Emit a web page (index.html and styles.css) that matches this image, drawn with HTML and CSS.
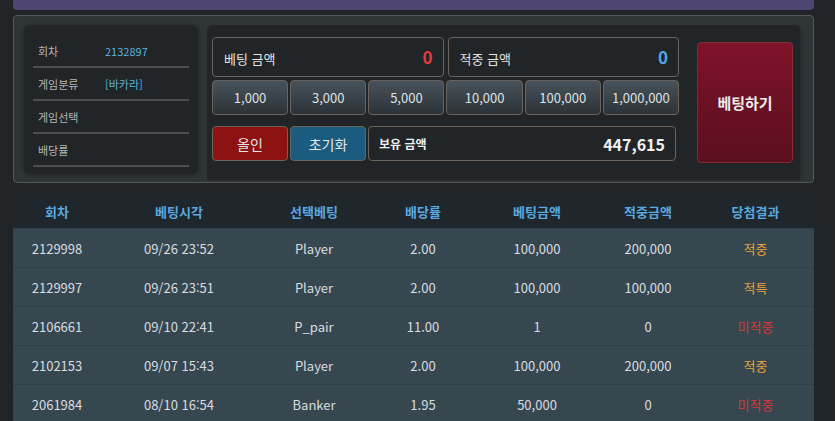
FILE: index.html
```html
<!DOCTYPE html>
<html lang="ko">
<head>
    <meta charset="UTF-8">
    <meta name="viewport" content="width=device-width, initial-scale=1.0">
    <title>베팅 내역</title>
    <link rel="stylesheet" href="styles.css">
</head>
<body>
    <div class="wrap">
        <div class="top-bar"></div>

        <div class="bet-panel">
            <div class="info-box">
                <div class="info-row"><span class="info-label">회차</span><span class="info-value">2132897</span></div>
                <div class="info-row"><span class="info-label">게임분류</span><span class="info-value">[바카라]</span></div>
                <div class="info-row"><span class="info-label">게임선택</span><span class="info-value"></span></div>
                <div class="info-row"><span class="info-label">배당률</span><span class="info-value"></span></div>
            </div>

            <div class="bet-box">
                <div class="bet-main">
                    <div class="amount-row">
                        <div class="amount">
                            <span class="amount-label">베팅 금액</span>
                            <span class="amount-num red">0</span>
                        </div>
                        <div class="amount">
                            <span class="amount-label">적중 금액</span>
                            <span class="amount-num blue">0</span>
                        </div>
                    </div>
                    <div class="chip-row">
                        <button class="chip">1,000</button>
                        <button class="chip">3,000</button>
                        <button class="chip">5,000</button>
                        <button class="chip">10,000</button>
                        <button class="chip">100,000</button>
                        <button class="chip">1,000,000</button>
                    </div>
                    <div class="action-row">
                        <button class="btn btn-allin">올인</button>
                        <button class="btn btn-reset">초기화</button>
                        <div class="balance">
                            <span>보유 금액</span>
                            <span class="balance-num">447,615</span>
                        </div>
                    </div>
                </div>
                <button class="btn-bet">베팅하기</button>
            </div>
        </div>

        <table class="history">
            <thead>
                <tr>
                    <th class="c1">회차</th>
                    <th class="c2">베팅시각</th>
                    <th class="c3">선택베팅</th>
                    <th class="c4">배당률</th>
                    <th class="c5">베팅금액</th>
                    <th class="c6">적중금액</th>
                    <th class="c7">당첨결과</th>
                </tr>
            </thead>
            <tbody>
                <tr>
                    <td>2129998</td><td>09/26 23:52</td><td>Player</td><td>2.00</td><td>100,000</td><td>200,000</td><td class="win">적중</td>
                </tr>
                <tr>
                    <td>2129997</td><td>09/26 23:51</td><td>Player</td><td>2.00</td><td>100,000</td><td>100,000</td><td class="win">적특</td>
                </tr>
                <tr>
                    <td>2106661</td><td>09/10 22:41</td><td>P_pair</td><td>11.00</td><td>1</td><td>0</td><td class="lose">미적중</td>
                </tr>
                <tr>
                    <td>2102153</td><td>09/07 15:43</td><td>Player</td><td>2.00</td><td>100,000</td><td>200,000</td><td class="win">적중</td>
                </tr>
                <tr>
                    <td>2061984</td><td>08/10 16:54</td><td>Banker</td><td>1.95</td><td>50,000</td><td>0</td><td class="lose">미적중</td>
                </tr>
            </tbody>
        </table>
    </div>
</body>
</html>
```

FILE: styles.css
```css
body {
    margin: 0;
    padding: 0;
    background-color: #222527;
    color: #d9dde0;
    font-family: "Noto Sans CJK KR", "Noto Sans", sans-serif;
    overflow: hidden;
}

.wrap {
    width: 801px;
    margin-left: 13px;
}

.top-bar {
    height: 10px;
    background-color: #4e4570;
    border-radius: 0 0 4px 4px;
}

/* 베팅 패널 */
.bet-panel {
    display: flex;
    align-items: flex-start;
    gap: 9px;
    margin-top: 5px;
    height: 168px;
    box-sizing: border-box;
    padding: 9px 9px 0 10px;
    background-color: #2f3436;
    border: 1px solid #55585a;
    border-radius: 4px;
}

.info-box {
    flex-shrink: 0;
    width: 174px;
    height: 149px;
    box-sizing: border-box;
    padding: 10px 9px 0 9px;
    background-color: #212527;
    border-radius: 6px;
    box-shadow: 0 1px 4px rgba(0, 0, 0, 0.35);
}

.info-row {
    display: flex;
    align-items: center;
    height: 31px;
    border-bottom: 2px solid #4b4d4e;
    font-size: 11px;
}

.info-label {
    width: 67px;
    padding-left: 5px;
    color: #b4b6b7;
}

.info-value {
    color: #5cb3df;
}

.bet-box {
    flex-shrink: 0;
    display: flex;
    align-items: flex-start;
    width: 596px;
    height: 155px;
    box-sizing: border-box;
    padding: 12px 7px 0 5px;
    background-color: #212527;
    border-radius: 6px 6px 0 0;
    border-right: 3px solid #2a2f31;
}

.bet-main {
    flex-shrink: 0;
    width: 467px;
}

.amount-row {
    display: flex;
    gap: 4px;
}

.amount {
    flex: 1;
    display: flex;
    justify-content: space-between;
    align-items: center;
    height: 40px;
    box-sizing: border-box;
    padding: 0 10px 0 11px;
    border: 1px solid #6b645c;
    border-radius: 4px;
    font-size: 13px;
    color: #e3e3e3;
}

.amount-label {
    padding-top: 2px;
}

.amount-num {
    font-size: 17px;
    font-weight: bold;
    padding-bottom: 2px;
}

.red {
    color: #e03c3c;
}

.blue {
    color: #55a8e8;
}

.chip-row {
    display: grid;
    grid-template-columns: repeat(6, 1fr);
    gap: 2px;
    margin-top: 3px;
}

.chip {
    height: 35px;
    font-family: inherit;
    font-size: 13px;
    color: #dde1e4;
    background: linear-gradient(#48525a, #2c3338);
    border: 1px solid #6b645c;
    border-radius: 4px;
    padding: 0;
}

.action-row {
    display: flex;
    gap: 2px;
    margin-top: 11px;
}

.btn {
    width: 76px;
    height: 35px;
    font-family: inherit;
    font-size: 14px;
    color: #e6e6e6;
    border: 1px solid #6b645c;
    border-radius: 4px;
    padding: 0;
}

.btn-allin {
    background-color: #8c1212;
}

.btn-reset {
    background-color: #1b5b7f;
}

.balance {
    display: flex;
    justify-content: space-between;
    align-items: center;
    width: 308px;
    height: 35px;
    box-sizing: border-box;
    padding: 0 10px 0 10px;
    border: 1px solid #6b645c;
    border-radius: 4px;
    font-size: 12px;
    font-weight: bold;
    color: #f0f0f0;
}

.balance-num {
    font-size: 16px;
}

.btn-bet {
    flex-shrink: 0;
    width: 96px;
    height: 121px;
    margin: 5px 0 0 18px;
    font-family: inherit;
    font-size: 15px;
    font-weight: bold;
    color: #ececec;
    background: linear-gradient(#7f1229, #5a0f1f);
    border: 1px solid #8a2a35;
    border-radius: 4px;
}

/* 베팅 내역 */
.history {
    width: 801px;
    margin-top: 11px;
    border-collapse: collapse;
    table-layout: fixed;
    font-size: 13px;
}

.history th {
    height: 34px;
    background-color: #1f262c;
    color: #5aa9e0;
    font-weight: bold;
    padding: 0;
}

.history td {
    height: 38px;
    text-align: center;
    background-color: #37474f;
    border-top: 1px solid #2e3f4b;
    padding: 0;
}

.c1 { width: 88px; }
.c2 { width: 156px; }
.c3 { width: 114px; }
.c4 { width: 104px; }
.c5 { width: 124px; }
.c6 { width: 98px; }
.c7 { width: 117px; }

.history td.win {
    color: #e9a23b;
}

.history td.lose {
    color: #dc3636;
}
```
